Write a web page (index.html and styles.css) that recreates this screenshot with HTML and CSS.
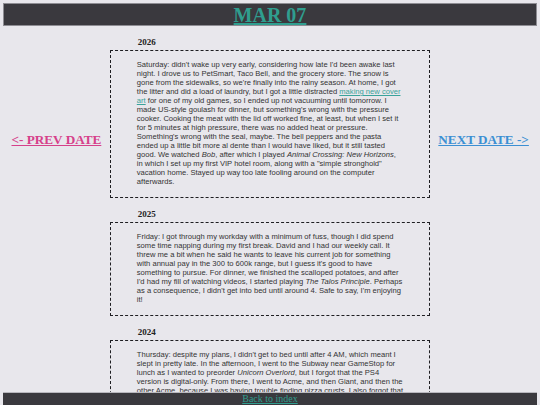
FILE: index.html
```html
<!DOCTYPE html>
<html lang="en">
<head>
<meta charset="utf-8">
<title>Mar 07</title>
<link rel="stylesheet" href="styles.css">
</head>
<body>
<header class="top-bar">
  <h1 class="day-title"><a href="#">MAR 07</a></h1>
</header>

<main class="layout">
  <nav class="side side-prev"><a class="nav-link prev" href="#">&lt;- PREV DATE</a></nav>

  <div class="entries">
    <section class="entry">
      <h3 class="entry-year">2026</h3>
      <div class="entry-box">
        <p>Saturday: didn't wake up very early, considering how late I'd been awake last night. I drove us to PetSmart, Taco Bell, and the grocery store. The snow is gone from the sidewalks, so we're finally into the rainy season. At home, I got the litter and did a load of laundry, but I got a little distracted <a class="inline-link" href="#">making new cover art</a> for one of my old games, so I ended up not vacuuming until tomorrow. I made US-style goulash for dinner, but something's wrong with the pressure cooker. Cooking the meat with the lid off worked fine, at least, but when I set it for 5 minutes at high pressure, there was no added heat or pressure. Something's wrong with the seal, maybe. The bell peppers and the pasta ended up a little bit more al dente than I would have liked, but it still tasted good. We watched <em>Bob</em>, after which I played <em>Animal Crossing: New Horizons</em>, in which I set up my first VIP hotel room, along with a "simple stronghold" vacation home. Stayed up way too late fooling around on the computer afterwards.</p>
      </div>
    </section>

    <section class="entry">
      <h3 class="entry-year">2025</h3>
      <div class="entry-box">
        <p>Friday: I got through my workday with a minimum of fuss, though I did spend some time napping during my first break. David and I had our weekly call. It threw me a bit when he said he wants to leave his current job for something with annual pay in the 300 to 600k range, but I guess it's good to have something to pursue. For dinner, we finished the scalloped potatoes, and after I'd had my fill of watching videos, I started playing <em>The Talos Principle</em>. Perhaps as a consequence, I didn't get into bed until around 4. Safe to say, I'm enjoying it!</p>
      </div>
    </section>

    <section class="entry">
      <h3 class="entry-year">2024</h3>
      <div class="entry-box">
        <p>Thursday: despite my plans, I didn't get to bed until after 4 AM, which meant I slept in pretty late. In the afternoon, I went to the Subway near GameStop for lunch as I wanted to preorder <em>Unicorn Overlord</em>, but I forgot that the PS4 version is digital-only. From there, I went to Acme, and then Giant, and then the other Acme, because I was having trouble finding pizza crusts. I also forgot that we still had some in the freezer, so now we have plenty. In the evening we made pizza and watched a couple of episodes of our show before bed.</p>
      </div>
    </section>
  </div>

  <nav class="side side-next"><a class="nav-link next" href="#">NEXT DATE -&gt;</a></nav>
</main>

<footer class="bottom-bar">
  <a class="back-link" href="#">Back to index</a>
</footer>
</body>
</html>
```

FILE: styles.css
```css
html, body {
  background: #e8e7ec;
}

body {
  margin: 3px;
  font-family: "Liberation Serif", "Times New Roman", serif;
  color: #222;
}

/* Title bar */
.top-bar {
  background: #3a393e;
  border: 1px solid #8e8d93;
  height: 21px;
  text-align: center;
}

.day-title {
  margin: 0;
  font-size: 20px;
  line-height: 23px;
  font-weight: bold;
}

.day-title a {
  color: #2f9e8f;
}

/* Three-column page body */
.layout {
  display: grid;
  grid-template-columns: 1fr 3fr 1fr;
  padding-bottom: 40px;
}

.side {
  text-align: center;
  padding-top: 104px;
}

.nav-link {
  font-weight: bold;
  font-size: 13.2px;
  line-height: 15px;
}

.nav-link.prev {
  color: #d6408a;
}

.nav-link.next {
  color: #3b8fd3;
}

/* Journal entries */
.entry-year {
  margin: 11px 0 3px 28px;
  font-size: 9px;
  line-height: 10px;
  font-weight: bold;
  color: #222;
}

.entry-box {
  border: 1px dashed #1e1e22;
  padding: 9px 26px 11px;
}

.entry-box p {
  margin: 0;
  font-family: "Liberation Sans", Arial, sans-serif;
  font-size: 7.6px;
  line-height: 9px;
  color: #333;
}

.inline-link {
  color: #3aa39b;
}

/* Fixed footer */
.bottom-bar {
  position: fixed;
  left: 3px;
  right: 3px;
  bottom: 0;
  height: 12px;
  background: #3a393e;
  border-top: 1px solid #b9b8be;
  text-align: center;
}

.back-link {
  display: block;
  font-size: 10px;
  line-height: 11px;
  color: #2f9e8f;
}
```
